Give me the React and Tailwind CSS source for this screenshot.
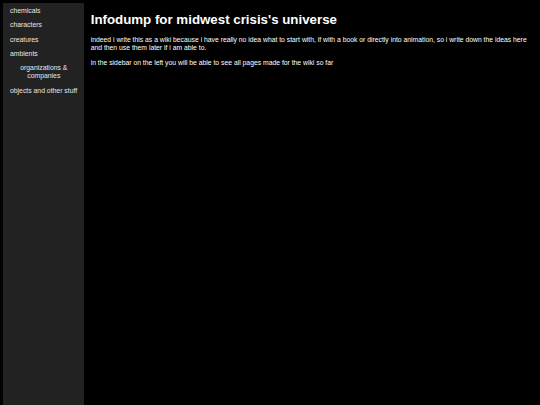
export default function App() {
  const pages = ['chemicals', 'characters', 'creatures', 'ambients']

  return (
    <div
      className="flex h-[405px] w-[540px] overflow-hidden bg-black pl-[3.3px] pt-[3.3px] leading-[1.15] text-white"
      style={{ fontFamily: '"Liberation Sans", Arial, sans-serif' }}
    >
      {/* Sidebar */}
      <nav className="w-[81px] shrink-0 bg-[#222222] text-[6.85px] text-[#e6e6e6]">
        {pages.map((p) => (
          <div key={p} className="px-[6.67px] py-[3.3px]">
            {p}
          </div>
        ))}
        <div className="px-[6.67px] py-[3.3px] text-center">organizations &amp; companies</div>
        <div className="px-[6.67px] py-[3.3px]">objects and other stuff</div>
      </nav>

      {/* Main */}
      <main className="flex-1 pl-[6.4px] pr-[6px]">
        <h1 className="mt-[8.9px] mb-[8.9px] text-[13.3px] font-bold">
          Infodump for midwest crisis's universe
        </h1>
        <p className="text-[6.8px]">
          indeed i write this as a wiki because i have really no idea what to start with, if with a book or directly
          into animation, so i write down the ideas here and then use them later if i am able to.
        </p>
        <p className="mt-[6.8px] text-[6.8px]">
          in the sidebar on the left you will be able to see all pages made for the wiki so far
        </p>
      </main>
    </div>
  )
}
